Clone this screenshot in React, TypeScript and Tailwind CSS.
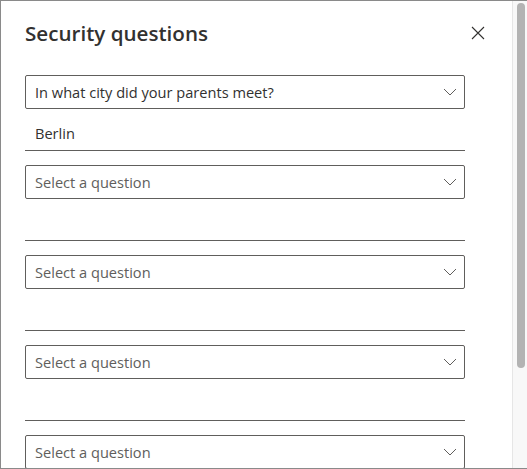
import React from "react";

function Chevron() {
  return (
    <svg width="14" height="8" viewBox="0 0 14 8" className="shrink-0">
      <path d="M1 1 L7 7 L13 1" fill="none" stroke="#605e5c" strokeWidth="1" />
    </svg>
  );
}

function Select({ value, placeholder }: { value?: string; placeholder?: string }) {
  return (
    <div className="flex h-[34px] w-[440px] items-center justify-between rounded-[2px] border border-[#605e5c] pl-[9px] pr-[7px]">
      <span className={value ? "pt-[2px] text-[#323130]" : "pt-[2px] text-[#605e5c]"}>{value ?? placeholder}</span>
      <Chevron />
    </div>
  );
}

function Field({ value }: { value?: string }) {
  return (
    <div className="mt-[8px] mb-[14px] flex h-[34px] w-[440px] items-center border-b border-[#605e5c] px-[10px] pt-[1px] text-[#323130]">
      {value}
    </div>
  );
}

export default function App() {
  const rows: { q?: string; a?: string }[] = [
    { q: "In what city did your parents meet?", a: "Berlin" },
    {},
    {},
    {},
    {},
  ];
  return (
    <div
      className="flex h-[469px] w-[527px] overflow-hidden border-y border-l border-[#8a8a8a] bg-white text-[14.6px]"
      style={{ fontFamily: '"Open Sans", "Noto Sans", sans-serif' }}
    >
      <div className="flex-1 overflow-hidden pl-[24px] pt-[18px]">
        <div className="flex h-[28px] w-[462px] items-center justify-between">
          <h1 className="text-[20.6px] font-semibold leading-[28px] text-[#323130]">Security questions</h1>
          <svg width="14" height="14" viewBox="0 0 14 14" className="mr-[2px]">
            <path d="M1 1 L13 13 M13 1 L1 13" stroke="#323130" strokeWidth="1.1" />
          </svg>
        </div>
        <div className="mt-[28px] flex flex-col">
          {rows.map((r, i) => (
            <div key={i} className="flex flex-col">
              <Select value={r.q} placeholder="Select a question" />
              <Field value={r.a} />
            </div>
          ))}
        </div>
      </div>
      <div className="flex w-[15px] shrink-0 justify-center border-l border-[#e6e6e6] bg-[#f8f8f8] pt-[2px]">
        <div className="ml-[1px] h-[365px] w-[8px] rounded-full bg-[#b3b3b3]" />
      </div>
    </div>
  );
}
